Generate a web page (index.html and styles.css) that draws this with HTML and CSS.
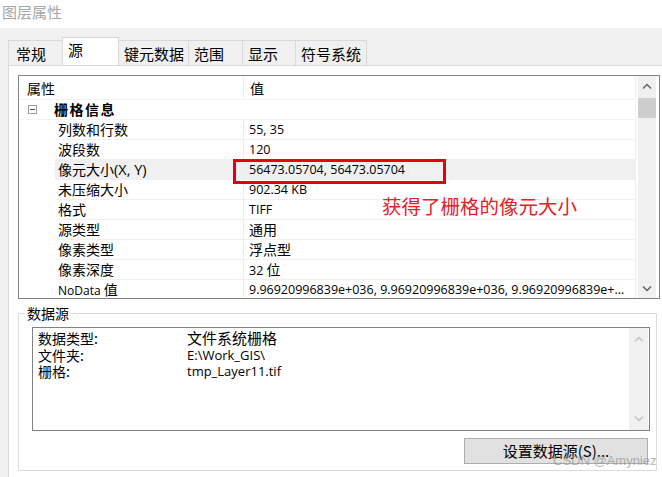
FILE: index.html
```
<!DOCTYPE html>
<html lang="zh-CN">
<head>
<meta charset="utf-8">
<title>图层属性</title>
<link rel="stylesheet" href="styles.css">
</head>
<body>
<div class="window">
  <div class="titlebar">图层属性</div>
  <div class="dialog">
    <div class="tabs">
      <div class="tab t1">常规</div>
      <div class="tab t2 active">源</div>
      <div class="tab t3">键元数据</div>
      <div class="tab t4">范围</div>
      <div class="tab t5">显示</div>
      <div class="tab t6">符号系统</div>
    </div>
    <div class="panel">
      <div class="grid">
        <div class="rows">
          <div class="row head"><div class="hc1">属性</div><div class="hc2">值</div></div>
          <div class="row cat"><span class="exp"></span><span class="catname">栅格信息</span></div>
          <div class="row"><div class="ind"></div><div class="lab">列数和行数</div><div class="val">55, 35</div></div>
          <div class="row"><div class="ind"></div><div class="lab">波段数</div><div class="val">120</div></div>
          <div class="row sel"><div class="ind"></div><div class="lab">像元大小<span class="lat">(X, Y)</span></div><div class="val">56473.05704, 56473.05704</div></div>
          <div class="row"><div class="ind"></div><div class="lab">未压缩大小</div><div class="val">902.34 KB</div></div>
          <div class="row"><div class="ind"></div><div class="lab">格式</div><div class="val">TIFF</div></div>
          <div class="row"><div class="ind"></div><div class="lab">源类型</div><div class="val"><span class="cj">通用</span></div></div>
          <div class="row"><div class="ind"></div><div class="lab">像素类型</div><div class="val"><span class="cj">浮点型</span></div></div>
          <div class="row"><div class="ind"></div><div class="lab">像素深度</div><div class="val">32 <span class="cj">位</span></div></div>
          <div class="row"><div class="ind"></div><div class="lab"><span class="sm">NoData</span> 值</div><div class="val">9.96920996839e+036, 9.96920996839e+036, 9.96920996839e+...</div></div>
        </div>
        <div class="vscroll">
          <div class="arrow up"><svg width="10" height="6" viewBox="0 0 10 6"><path d="M1 5.5 L5 1.5 L9 5.5" fill="none" stroke="#606060" stroke-width="1.4"/></svg></div>
          <div class="thumb"></div>
          <div class="track"></div>
          <div class="arrow down"><svg width="10" height="6" viewBox="0 0 10 6"><path d="M1 0.5 L5 4.5 L9 0.5" fill="none" stroke="#606060" stroke-width="1.4"/></svg></div>
        </div>
      </div>
      <fieldset class="group">
        <legend>数据源</legend>
        <div class="list">
          <div class="lines">
            <div class="line"><span class="k">数据类型:</span><span class="v cjv">文件系统栅格</span></div>
            <div class="line"><span class="k">文件夹:</span><span class="v">E:\Work_GIS\</span></div>
            <div class="line"><span class="k">栅格:</span><span class="v">tmp_Layer11.tif</span></div>
          </div>
          <div class="lscroll">
            <div class="arrow up"><svg width="10" height="6" viewBox="0 0 10 6"><path d="M1 5.5 L5 1.5 L9 5.5" fill="none" stroke="#c2c2c2" stroke-width="1.3"/></svg></div>
            <div class="track"></div>
            <div class="arrow down"><svg width="10" height="6" viewBox="0 0 10 6"><path d="M1 0.5 L5 4.5 L9 0.5" fill="none" stroke="#c2c2c2" stroke-width="1.3"/></svg></div>
          </div>
        </div>
        <div class="btnrow"><button class="btn">设置数据源(S)...</button></div>
      </fieldset>
    </div>
  </div>
  <div class="redbox"></div>
  <div class="note">获得了栅格的像元大小</div>
  <div class="watermark">CSDN @Amyniez</div>
</div>
</body>
</html>
```
FILE: styles.css
```
* { box-sizing: border-box; }
html, body { margin: 0; padding: 0; background: #ffffff; }
body {
  font-family: "Open Sans", "Noto Sans CJK SC", sans-serif;
  color: #000;
}
.window {
  position: relative;
  width: 662px;
  height: 477px;
  overflow: hidden;
  background: #ffffff;
}
.titlebar {
  height: 28px;
  padding-left: 2px;
  font-family: "Noto Sans CJK SC", sans-serif;
  font-size: 15px;
  line-height: 24px;
  color: #a6a6a6;
  background: #ffffff;
}
.dialog {
  height: 449px;
  background: #f0f0f0;
}
.tabs {
  height: 37px;
  display: flex;
  align-items: flex-end;
  padding-left: 8px;
}
.tab {
  height: 25px;
  border: 1px solid #d9d9d9;
  border-bottom: none;
  margin-right: -1px;
  background: #f0f0f0;
  font-family: "Noto Sans CJK SC", sans-serif;
  font-size: 15px;
  line-height: 23px;
  padding: 1px 0 0 5px;
  white-space: nowrap;
}
.tab.active {
  height: 28px;
  background: #ffffff;
  line-height: 22px;
  padding-top: 1px;
  position: relative;
  z-index: 1;
}
.t1 { width: 55px; padding-left: 7px; }
.t2 { width: 57px; }
.t3 { width: 71px; }
.t4 { width: 55px; }
.t5 { width: 54px; }
.t6 { width: 72px; }

.panel {
  margin-left: 8px;
  height: 412px;
  background: #ffffff;
  border-top: 1px solid #d9d9d9;
  border-left: 1px solid #d9d9d9;
  padding: 9px 0 0 9px;
}
.grid {
  width: 642px;
  height: 224px;
  border: 1px solid #828282;
  display: flex;
  background: #ffffff;
  overflow: hidden;
}
.rows {
  width: 617px;
  border-right: 1px solid #eeeeee;
  margin-right: 2px;
}
.row {
  height: 20px;
  display: flex;
  font-family: "Noto Sans CJK SC", sans-serif;
  font-size: 14px;
  line-height: 19px;
}
.row.head {
  height: 24px;
  line-height: 24px;
}
.hc1 {
  width: 225px;
  padding-left: 8px;
  border-right: 1px solid #eeeeee;
  border-bottom: 1px solid #f2f2f2;
}
.hc2 {
  flex: 1;
  padding-left: 6px;
  border-bottom: 1px solid #f2f2f2;
}
.row.cat {
  align-items: center;
  border-bottom: 1px solid #f2f2f2;
}
.exp {
  width: 9px;
  height: 9px;
  margin-left: 9px;
  border: 1px solid #a0a0a0;
  position: relative;
  background: #fff;
}
.exp::after {
  content: "";
  position: absolute;
  left: 1px;
  top: 3px;
  width: 5px;
  height: 1px;
  background: #505050;
}
.catname {
  margin-left: 17px;
  font-weight: bold;
  letter-spacing: 1.5px;
}
.ind { width: 36px; }
.lab {
  width: 189px;
  padding-left: 3px;
  border-right: 1px solid #eeeeee;
  border-bottom: 1px solid #f0f0f0;
  white-space: nowrap;
}
.lat { font-family: "Open Sans", sans-serif; font-size: 14.5px; }
.sm { font-family: "Open Sans", sans-serif; font-size: 12px; }
.val {
  flex: 1;
  padding-left: 5px;
  border-bottom: 1px solid #f0f0f0;
  font-family: "Open Sans", "Noto Sans CJK SC", sans-serif;
  font-size: 12.5px;
  white-space: nowrap;
  overflow: hidden;
}
.cj { font-family: "Noto Sans CJK SC", sans-serif; font-size: 14px; }
.row.sel .lab, .row.sel .val { background: #f0f0f0; }

.vscroll {
  width: 18px;
  display: flex;
  flex-direction: column;
  background: #f0f0f0;
}
.arrow {
  height: 19px;
  display: flex;
  align-items: center;
  justify-content: center;
}
.thumb {
  height: 20px;
  margin-top: 3px;
  background: #cdcdcd;
}
.track { flex: 1; }

.group {
  margin: 5px 0 0 0;
  width: 639px;
  padding: 0 0 6px 0;
  border: 1px solid #dcdcdc;
  min-width: 0;
}
.group legend {
  margin-left: 6px;
  padding: 0 2px;
  font-family: "Noto Sans CJK SC", sans-serif;
  font-size: 14px;
  line-height: 18px;
  color: #000;
}
.list {
  margin: 5px 6px 0 13px;
  height: 104px;
  border: 1px solid #828282;
  display: flex;
  background: #fff;
}
.lines {
  flex: 1;
  padding: 2px 0 0 5px;
}
.line {
  height: 16.5px;
  line-height: 16.5px;
  display: flex;
  font-size: 13px;
  white-space: nowrap;
}
.k {
  width: 149px;
  font-family: "Noto Sans CJK SC", sans-serif;
  font-size: 14px;
}
.v { font-family: "Open Sans", sans-serif; font-size: 13px; }
.v.cjv { font-family: "Noto Sans CJK SC", sans-serif; font-size: 15px; }
.lscroll {
  width: 19px;
  margin: 0 1px 0 0;
  display: flex;
  flex-direction: column;
  background: #f0f0f0;
}
.lscroll .arrow { height: 22px; }
.btnrow {
  display: flex;
  justify-content: flex-end;
  padding: 7px 8px 0 0;
}
.btn {
  width: 184px;
  height: 26px;
  background: #e1e1e1;
  border: 1px solid #adadad;
  border-radius: 0;
  font-family: "Noto Sans CJK SC", sans-serif;
  font-size: 15px;
  line-height: 22px;
  padding: 0;
  color: #000;
}

.redbox {
  position: absolute;
  left: 233px;
  top: 159px;
  width: 213px;
  height: 25px;
  border: 3px solid #e3000f;
}
.note {
  position: absolute;
  left: 382px;
  top: 193px;
  font-family: "Noto Sans CJK SC", sans-serif;
  font-size: 19.5px;
  line-height: 26px;
  color: #e5202a;
  white-space: nowrap;
}
.watermark {
  position: absolute;
  left: 553px;
  top: 453px;
  font-family: "Liberation Sans", sans-serif;
  font-size: 13px;
  line-height: 16px;
  color: rgba(140, 140, 140, 0.65);
  white-space: nowrap;
}
```
